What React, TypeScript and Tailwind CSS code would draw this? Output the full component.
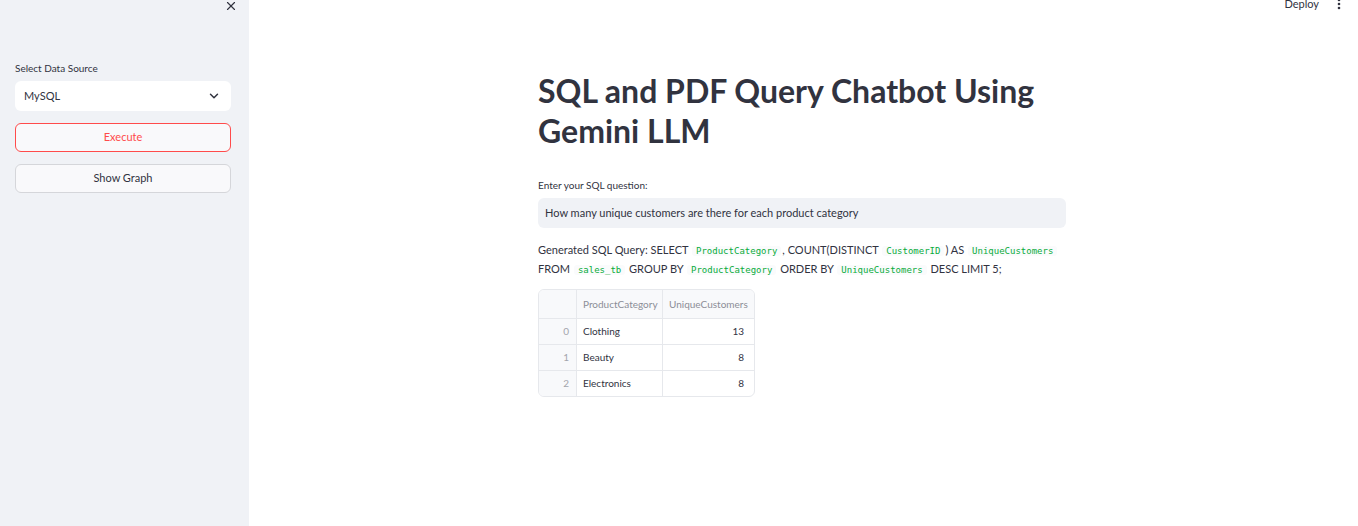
import { ChevronDown, X } from "lucide-react";

const font = { fontFamily: 'Lato, "Noto Sans", sans-serif' };

function Code({ children }: { children: React.ReactNode }) {
  return (
    <code className="mx-[1px] rounded-[3px] bg-[#fafbfc] px-[4px] font-['DejaVu_Sans_Mono',monospace] text-[9px] leading-none text-[#09ab3b]">
      {children}
    </code>
  );
}

const rows = [
  { i: 0, cat: "Clothing", n: 13 },
  { i: 1, cat: "Beauty", n: 8 },
  { i: 2, cat: "Electronics", n: 8 },
];

export default function App() {
  return (
    <div className="flex h-[526px] w-[1358px] overflow-hidden bg-white text-[#31333f]" style={font}>
      {/* sidebar */}
      <aside className="flex w-[249px] shrink-0 flex-col bg-[#f0f2f6] pl-[15px] pr-[18px]">
        <div className="flex h-[12px] justify-end">
          <X size={14} strokeWidth={2} className="-mr-[7px] -mt-[1px] text-[#31333f]" />
        </div>
        <div className="mt-[49px] text-[10px] leading-[14px]">Select Data Source</div>
        <div className="mt-[6px] flex h-[30px] items-center justify-between rounded-[6px] bg-white pl-[9px] pr-[10px] text-[11px]">
          <span>MySQL</span>
          <ChevronDown size={14} strokeWidth={2.5} />
        </div>
        <button className="mt-[12px] h-[29px] rounded-[6px] border border-[#ff4b4b] bg-[#f9f9fb] text-[11px] text-[#ff4b4b]">Execute</button>
        <button className="mt-[12px] h-[29px] rounded-[6px] border border-[#d5d6da] bg-[#f9f9fb] text-[11px]">Show Graph</button>
      </aside>

      {/* main */}
      <main className="relative flex-1 pr-[3px]">
        <div className="absolute right-[17px] top-[-4px] flex items-center gap-[18px] text-[11px]">
          <span>Deploy</span>
          <svg width="4" height="12" viewBox="0 0 4 12" fill="#31333f">
            <circle cx="2" cy="2" r="1.3" />
            <circle cx="2" cy="6" r="1.3" />
            <circle cx="2" cy="10" r="1.3" />
          </svg>
        </div>

        <div className="mx-auto w-[528px] pt-[71px]">
          <h1 className="text-[32px] font-bold leading-[40px]">SQL and PDF Query Chatbot Using Gemini LLM</h1>

          <div className="mt-[27px] text-[10px] leading-[14px]">Enter your SQL question:</div>
          <div className="mt-[6px] flex h-[30px] items-center rounded-[6px] bg-[#f0f2f6] px-[7px] text-[11px]">
            How many unique customers are there for each product category
          </div>

          <p className="mt-[12px] text-[11px] leading-[19px]">
            Generated SQL Query: SELECT <Code>ProductCategory</Code>, COUNT(DISTINCT <Code>CustomerID</Code>) AS <Code>UniqueCustomers</Code>
            <br />
            FROM <Code>sales_tb</Code> GROUP BY <Code>ProductCategory</Code> ORDER BY <Code>UniqueCustomers</Code> DESC LIMIT 5;
          </p>

          <div className="mt-[11px] w-[217px] overflow-hidden rounded-[6px] border border-[#e6e8ec] text-[10px]">
            <div className="grid grid-cols-[38px_86px_87px] bg-[#f8f9fb] text-[#8c8e97]">
              <div className="h-[28px] border-r border-[#e6e8ec]" />
              <div className="flex h-[28px] items-center border-r border-[#e6e8ec] px-[6px]">ProductCategory</div>
              <div className="flex h-[28px] items-center px-[6px]">UniqueCustomers</div>
            </div>
            {rows.map((r) => (
              <div key={r.i} className="grid grid-cols-[38px_86px_87px] border-t border-[#e6e8ec]">
                <div className="flex h-[25px] items-center justify-end border-r border-[#e6e8ec] bg-[#f8f9fb] px-[7px] text-[#a3a5ad]">{r.i}</div>
                <div className="flex h-[25px] items-center border-r border-[#e6e8ec] px-[6px]">{r.cat}</div>
                <div className="flex h-[25px] items-center justify-end px-[6px]">{r.n}</div>
              </div>
            ))}
          </div>
        </div>
      </main>
    </div>
  );
}
